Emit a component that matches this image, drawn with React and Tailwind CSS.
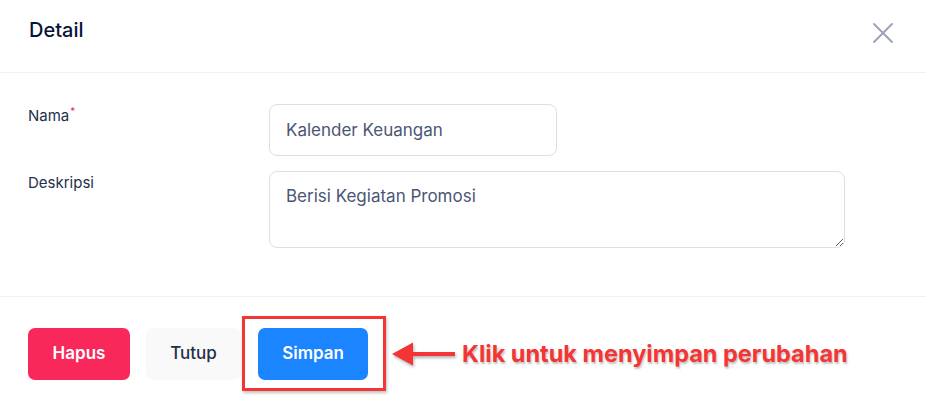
export default function App() {
  return (
    <div className="w-[926px] h-[404px] bg-white overflow-hidden font-['Inter',sans-serif]">
      <div className="h-[73px] border-b border-[#f1f1f4] flex items-start justify-between pl-[29px] pr-[32px] pt-[17px]">
        <h2 className="text-[20px] leading-[26px] font-medium text-[#071437]">Detail</h2>
        <button className="mt-[5px] text-[#99a1b7]">
          <svg width="22" height="22" viewBox="0 0 22 22" fill="none" stroke="currentColor" strokeWidth="1.8" strokeLinecap="round">
            <path d="M2 2l18 18M20 2L2 20" />
          </svg>
        </button>
      </div>

      <div className="h-[224px] border-b border-[#f1f1f4] pt-[31px] pl-[28px]">
        <div className="flex">
          <label className="w-[241px] text-[15px] leading-[24px] text-[#252f4a]">
            Nama<span className="relative -top-[6px] ml-[1px] text-[10px] text-[#f8285a]">*</span>
          </label>
          <input
            readOnly
            value="Kalender Keuangan"
            className="w-[288px] h-[52px] rounded-[8px] border border-[#dbdfe9] px-[16px] text-[17px] text-[#4b5675] outline-none"
          />
        </div>
        <div className="flex mt-[15px]">
          <label className="w-[241px] text-[15px] leading-[24px] text-[#252f4a]">Deskripsi</label>
          <textarea
            readOnly
            value="Berisi Kegiatan Promosi"
            className="w-[576px] h-[77px] rounded-[8px] border border-[#dbdfe9] px-[16px] pt-[12px] text-[17px] leading-[24px] text-[#4b5675] outline-none resize-y"
          />
        </div>
      </div>

      <div className="flex items-center pl-[28px] pt-[31px]">
        <button className="w-[102px] h-[52px] rounded-[7px] bg-[#f8285a] text-white text-[17px] font-semibold">Hapus</button>
        <button className="ml-[16px] w-[95px] h-[52px] rounded-[7px] bg-[#f9f9f9] text-[#252f4a] text-[17px] font-medium">Tutup</button>
        <div className="relative ml-[17px]">
          <button className="w-[110px] h-[52px] rounded-[7px] bg-[#1b84ff] text-white text-[17px] font-semibold">Simpan</button>
          <div className="absolute -left-[16px] -top-[12px] -right-[18px] -bottom-[11px] border-[3px] border-[#f33535] shadow-[1px_2px_3px_rgba(0,0,0,0.25)] pointer-events-none" />
        </div>
        <svg className="ml-[24px] drop-shadow-[1px_2px_1.5px_rgba(0,0,0,0.3)]" width="63" height="26" viewBox="0 0 63 26">
          <path d="M20 11h43v4H20z" fill="#f33535" />
          <path d="M0 13L21 1.5v23z" fill="#f33535" />
        </svg>
        <span className="ml-[7px] text-[23.5px] font-bold text-[#f33535] [text-shadow:1px_2px_2px_rgba(0,0,0,0.25)]">
          Klik untuk menyimpan perubahan
        </span>
      </div>
    </div>
  );
}
